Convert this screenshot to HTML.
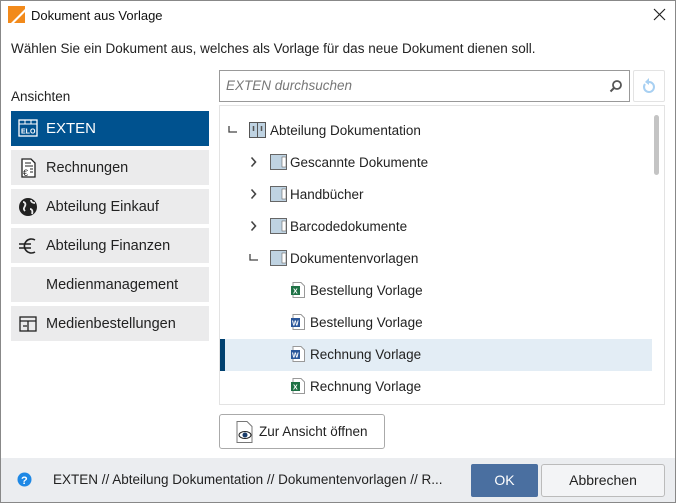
<!DOCTYPE html>
<html><head><meta charset="utf-8"><style>
*{box-sizing:border-box;margin:0;padding:0}
body{width:676px;height:503px;overflow:hidden;font-family:"Liberation Sans",sans-serif;color:#222;background:#fff;position:relative;font-size:13.5px}
.win{position:absolute;left:0;top:0;width:676px;height:503px;border:1px solid #888}
.abs{position:absolute}
.title{left:31px;top:8px;font-size:13px;color:#111}
.nav{position:absolute;left:11px;width:198px;height:35px;background:#ebebec;display:flex;align-items:center;padding-left:35px;font-size:14.5px;color:#222}
.nav svg{position:absolute;left:7px;top:8px}
.tx{position:absolute;margin-top:1px}
</style></head><body>
<div class="win"></div>
<svg class="abs" style="left:8px;top:6px" width="17" height="17"><rect width="17" height="17" fill="#f28a1b"/><path d="M3 17 L17 3 L17 6 L6 17Z" fill="#fff"/></svg>
<div class="abs title">Dokument aus Vorlage</div>
<svg class="abs" style="left:653px;top:8px" width="13" height="13"><path d="M1 1L12 12M12 1L1 12" stroke="#222" stroke-width="1.2"/></svg>
<div class="abs" style="left:11px;top:41px;font-size:13.5px;color:#222">Wählen Sie ein Dokument aus, welches als Vorlage für das neue Dokument dienen soll.</div>
<div class="abs" style="left:11px;top:89px;font-size:13.5px">Ansichten</div>

<div class="nav" style="top:111px;background:#00528f;color:#fff;font-size:15px">
<svg width="20" height="18"><rect x="1" y="1" width="18" height="16" fill="none" stroke="#fff" stroke-width="1.3"/><line x1="1" y1="5" x2="19" y2="5" stroke="#fff"/><line x1="7" y1="1" x2="7" y2="5" stroke="#fff"/><line x1="13" y1="1" x2="13" y2="5" stroke="#fff"/><text x="3" y="14.5" font-size="7" font-weight="bold" fill="#fff" font-family="Liberation Sans">ELO</text></svg>EXTEN</div>
<div class="nav" style="top:150px"><svg width="20" height="20"><path d="M4 1h9l4 4v14H4z" fill="#fff" stroke="#222" stroke-width="1.3"/><path d="M7 5h6M7 8h8M12 11h3M12 14h3" stroke="#222"/><text x="5" y="18" font-size="9" fill="#222">€</text></svg>Rechnungen</div>
<div class="nav" style="top:189px"><svg width="20" height="20"><circle cx="10" cy="10" r="9" fill="#222"/><path d="M5 5c2 0 3 2 2 4s-2 3 0 5M13 3c0 2 2 3 4 3M12 12c2 0 3 2 2 5" stroke="#ebebec" stroke-width="1.8" fill="none"/></svg>Abteilung Einkauf</div>
<div class="nav" style="top:228px"><svg width="20" height="20"><path d="M17 4a7 7 0 1 0 0 12" fill="none" stroke="#222" stroke-width="1.6"/><path d="M1 8h12M1 12h12" stroke="#222" stroke-width="1.4"/></svg>Abteilung Finanzen</div>
<div class="nav" style="top:267px">Medienmanagement</div>
<div class="nav" style="top:306px"><svg width="20" height="20"><rect x="2" y="3" width="16" height="14" fill="none" stroke="#222" stroke-width="1.3"/><path d="M2 7h16M10 7v10M5 12h4" stroke="#222" stroke-width="1.3"/></svg>Medienbestellungen</div>

<div class="abs" style="left:219px;top:70px;width:411px;height:32px;border:1px solid #999;"></div>
<div class="abs" style="left:226px;top:78px;font-style:italic;color:#777;font-size:13.5px">EXTEN durchsuchen</div>
<svg class="abs" style="left:609px;top:79px" width="14" height="14"><circle cx="8" cy="6" r="4" fill="none" stroke="#555" stroke-width="1.8"/><path d="M5 9L1.5 12.5" stroke="#555" stroke-width="2"/></svg>
<div class="abs" style="left:633px;top:70px;width:32px;height:32px;border:1px solid #e3e3e3;border-radius:2px"></div>
<svg class="abs" style="left:639px;top:76px" width="20" height="20"><path d="M6 8a5 5 0 1 0 4-2" fill="none" stroke="#a8d0f2" stroke-width="2"/><path d="M10 2v7l-4-3z" fill="#a8d0f2"/></svg>

<div class="abs" style="left:219px;top:105px;width:446px;height:300px;border:1px solid #e3e3e3"></div>
<div class="abs" style="left:654px;top:115px;width:5px;height:60px;background:#c4c4c4;border-radius:3px"></div>

<div class="abs" style="left:220px;top:339px;width:432px;height:32px;background:#e3edf5"><div style="position:absolute;left:0;top:0;width:5px;height:32px;background:#00406f"></div></div>

<svg class="abs" style="left:228px;top:124px" width="10" height="10"><path d="M1 2v6h8" fill="none" stroke="#444" stroke-width="1.3"/></svg>
<svg class="abs" style="left:249px;top:122px" width="17" height="16"><rect x="0.5" y="0.5" width="16" height="15" fill="#bfd3e2" stroke="#555"/><path d="M8.5 1v15" stroke="#555"/><path d="M4.5 4v5M12.5 4v5" stroke="#555" stroke-width="1.5"/></svg>
<div class="tx" style="left:270px;top:122px">Abteilung Dokumentation</div>

<svg class="abs" style="left:250px;top:156px" width="8" height="12"><path d="M1.5 1.5l4 4.5-4 4.5" fill="none" stroke="#444" stroke-width="1.6"/></svg>
<svg class="abs" style="left:270px;top:154px" width="17" height="16"><rect x="0.5" y="0.5" width="16" height="15" fill="#bfd3e2" stroke="#666"/><rect x="12" y="3" width="4" height="10" fill="#fff" stroke="#666" stroke-width=".6"/></svg>
<div class="tx" style="left:290px;top:154px">Gescannte Dokumente</div>
<svg class="abs" style="left:250px;top:188px" width="8" height="12"><path d="M1.5 1.5l4 4.5-4 4.5" fill="none" stroke="#444" stroke-width="1.6"/></svg>
<svg class="abs" style="left:270px;top:186px" width="17" height="16"><rect x="0.5" y="0.5" width="16" height="15" fill="#bfd3e2" stroke="#666"/><rect x="12" y="3" width="4" height="10" fill="#fff" stroke="#666" stroke-width=".6"/></svg>
<div class="tx" style="left:290px;top:186px">Handbücher</div>
<svg class="abs" style="left:250px;top:220px" width="8" height="12"><path d="M1.5 1.5l4 4.5-4 4.5" fill="none" stroke="#444" stroke-width="1.6"/></svg>
<svg class="abs" style="left:270px;top:218px" width="17" height="16"><rect x="0.5" y="0.5" width="16" height="15" fill="#bfd3e2" stroke="#666"/><rect x="12" y="3" width="4" height="10" fill="#fff" stroke="#666" stroke-width=".6"/></svg>
<div class="tx" style="left:290px;top:218px">Barcodedokumente</div>
<svg class="abs" style="left:249px;top:252px" width="10" height="10"><path d="M1 2v6h8" fill="none" stroke="#444" stroke-width="1.3"/></svg>
<svg class="abs" style="left:270px;top:250px" width="17" height="16"><rect x="0.5" y="0.5" width="16" height="15" fill="#bfd3e2" stroke="#666"/><rect x="12" y="3" width="4" height="10" fill="#fff" stroke="#666" stroke-width=".6"/></svg>
<div class="tx" style="left:290px;top:250px">Dokumentenvorlagen</div>

<svg class="abs" style="left:291px;top:282px" width="14" height="16"><path d="M2 .5h8l3.5 3.5v11.5H2z" fill="#fff" stroke="#999"/><rect x="0" y="4" width="9" height="9" fill="#1e7145"/><text x="2" y="11.5" font-size="7" font-weight="bold" fill="#fff" font-family="Liberation Sans">X</text></svg>
<div class="tx" style="left:310px;top:282px">Bestellung Vorlage</div>
<svg class="abs" style="left:291px;top:314px" width="14" height="16"><path d="M2 .5h8l3.5 3.5v11.5H2z" fill="#fff" stroke="#999"/><rect x="0" y="4" width="9" height="9" fill="#2b579a"/><text x="1" y="11.5" font-size="7" font-weight="bold" fill="#fff" font-family="Liberation Sans">W</text></svg>
<div class="tx" style="left:310px;top:314px">Bestellung Vorlage</div>
<svg class="abs" style="left:291px;top:346px" width="14" height="16"><path d="M2 .5h8l3.5 3.5v11.5H2z" fill="#fff" stroke="#999"/><rect x="0" y="4" width="9" height="9" fill="#2b579a"/><text x="1" y="11.5" font-size="7" font-weight="bold" fill="#fff" font-family="Liberation Sans">W</text></svg>
<div class="tx" style="left:310px;top:346px">Rechnung Vorlage</div>
<svg class="abs" style="left:291px;top:378px" width="14" height="16"><path d="M2 .5h8l3.5 3.5v11.5H2z" fill="#fff" stroke="#999"/><rect x="0" y="4" width="9" height="9" fill="#1e7145"/><text x="2" y="11.5" font-size="7" font-weight="bold" fill="#fff" font-family="Liberation Sans">X</text></svg>
<div class="tx" style="left:310px;top:378px">Rechnung Vorlage</div>

<div class="abs" style="left:219px;top:414px;width:166px;height:35px;border:1px solid #aaa;border-radius:3px"></div>
<svg class="abs" style="left:235px;top:421px" width="20" height="22"><path d="M2 .5h10l5 5v16H2z" fill="#fff" stroke="#777"/><ellipse cx="10" cy="14" rx="6" ry="3.5" fill="#fff" stroke="#222"/><circle cx="10" cy="14" r="2.5" fill="#1a3d6b"/></svg>
<div class="abs" style="left:259px;top:424px;font-size:13.5px">Zur Ansicht öffnen</div>

<div class="abs" style="left:1px;top:458px;width:674px;height:44px;background:#ebedf0"></div>
<svg class="abs" style="left:17px;top:472px" width="15" height="15"><circle cx="7.5" cy="7.5" r="7" fill="#1e88e5"/><text x="4" y="12" font-size="11" font-weight="bold" fill="#fff" font-family="Liberation Sans">?</text></svg>
<div class="abs" style="left:53px;top:472px;font-size:13.5px">EXTEN // Abteilung Dokumentation // Dokumentenvorlagen // R...</div>
<div class="abs" style="left:471px;top:464px;width:67px;height:33px;background:#4a6fa0;border-radius:2px;color:#fff;text-align:center;line-height:33px;font-size:14px">OK</div>
<div class="abs" style="left:541px;top:464px;width:124px;height:33px;border:1px solid #bbb;border-radius:3px;background:#f3f4f6;text-align:center;line-height:31px;font-size:14px">Abbrechen</div>
</body></html>
